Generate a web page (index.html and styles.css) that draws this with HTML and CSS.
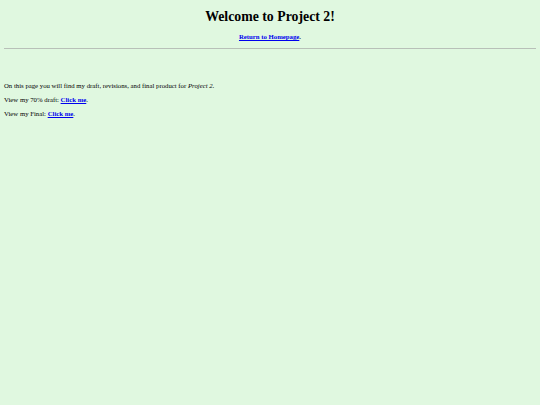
FILE: index.html
```html
<!DOCTYPE html>
<html>
<head>
<meta charset="utf-8">
<title>Project 2</title>
<link rel="stylesheet" href="styles.css">
</head>
<body>
<header class="top">
  <h1 class="title">Welcome to Project 2!</h1>
  <p class="home"><a href="#">Return to Homepage</a>.</p>
</header>
<hr class="rule">
<main class="content">
  <p>On this page you will find my draft, revisions, and final product for <em>Project 2</em>.</p>
  <p>View my 70% draft: <a class="strong" href="#">Click me</a>.</p>
  <p>View my Final: <a class="strong" href="#">Click me</a>.</p>
</main>
</body>
</html>
```
FILE: styles.css
```css
html { background: #e0f8e0; }
body {
  margin: 0;
  padding: 4px;
  font-family: "Liberation Serif", "Times New Roman", serif;
  font-size: 6.75px;
  color: #000;
  background: #e0f8e0;
}
.top { text-align: center; }
.title {
  font-size: 13.8px;
  font-weight: bold;
  margin: 5px 0 0 0;
  line-height: 16px;
}
.home {
  margin: 8px 0 0 0;
  font-weight: bold;
  line-height: 8px;
}
a { color: #0000ee; }
.rule {
  margin: 7px 0 0 0;
  border: 0;
  border-top: 1px solid #b8c0b8;
  height: 0;
}
.content { margin-top: 33px; }
.content p { margin: 0 0 6px 0; line-height: 8px; }
.strong { font-weight: bold; }
```
